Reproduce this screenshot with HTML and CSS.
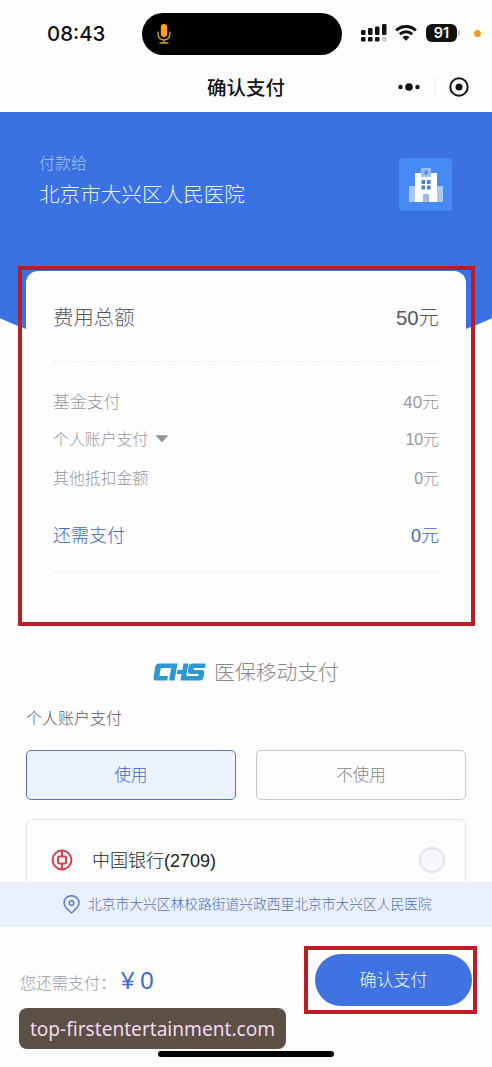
FILE: index.html
```html
<!DOCTYPE html>
<html lang="zh-CN">
<head>
<meta charset="utf-8">
<title>确认支付</title>
<link rel="stylesheet" href="styles.css">
</head>
<body>
<div class="screen">
  <header class="status">
    <span class="time">08:43</span>
    <div class="island">
      <svg width="16" height="22" viewBox="0 0 16 22" fill="none">
        <rect x="4.800" y="1" width="6.400" height="13" rx="3.200" fill="#ff9d1c"/>
        <path d="M2 8.500v2.500a6 6 0 0 0 12 0V8.500M8 17v3M3.500 20h9" stroke="#c9a32b" stroke-width="1.400"/>
      </svg>
    </div>
    <div class="indicators">
      <svg class="signal" width="26" height="18" viewBox="0 0 26 18" fill="#111">
        <rect x="0" y="6" width="4.500" height="5" rx="1.300"/><rect x="7" y="4" width="4.500" height="7" rx="1.300"/><rect x="14" y="2.500" width="4.500" height="8.500" rx="1.300"/><rect x="21" y="0" width="4.500" height="11" rx="1.300"/>
        <rect x="0" y="13" width="4.500" height="4.500" rx="1.300"/><rect x="7" y="13" width="4.500" height="4.500" rx="1.300"/><rect x="14" y="13" width="4.500" height="4.500" rx="1.300"/><rect x="21" y="13" width="4.500" height="4.500" rx="1.300" fill="#ccc"/>
      </svg>
      <svg class="wifi" width="22" height="16" viewBox="0 0 22 16" fill="none" stroke="#111" stroke-width="2.900">
        <path d="M1.200 5.500a14 14 0 0 1 19.600 0M4.800 9.300a9 9 0 0 1 12.400 0"/>
        <path d="M11 15.800 7.500 12.200a5 5 0 0 1 7 0Z" fill="#111" stroke="none"/>
      </svg>
      <span class="battery">91</span><i class="battery-tip"></i><i class="privacy-dot"></i>
    </div>
  </header>
  <nav class="nav">
    <span></span>
    <h1>确认支付</h1>
    <div class="capsule">
      <svg width="22" height="8" viewBox="0 0 22 8" fill="#111"><circle cx="2.500" cy="4" r="2.200"/><circle cx="11" cy="4" r="3.800"/><circle cx="19.500" cy="4" r="2.200"/></svg>
      <i class="split"></i>
      <svg width="20" height="20" viewBox="0 0 20 20"><circle cx="10" cy="10" r="8.700" fill="none" stroke="#111" stroke-width="2"/><circle cx="10" cy="10" r="3.500" fill="#111"/></svg>
    </div>
  </nav>

  <section class="hero">
    <div class="payee"><span class="payee-label">付款给</span><span class="payee-name">北京市大兴区人民医院</span></div>
    <div class="hospital">
      <svg width="36" height="36" viewBox="0 0 36 36">
        <path fill="#a9c9fd" d="M1 19h7v16H1zM28 19h7v16h-7z"/>
        <path fill="#fff" d="M7 6h22v29H7z"/>
        <path fill="#9bc1fb" d="M13 1h10v9H13z"/>
        <path d="M18 3v5M15.500 5.500h5" stroke="#4c86e8" stroke-width="1.500"/>
        <path fill="#4680e6" d="M13.500 13H17v4h-3.500zM19 13h3.500v4H19zM13.500 18.500H17v4h-3.500zM19 18.500h3.500v4H19z"/>
        <path fill="#9db9ee" d="M15 27h6v8h-6z"/>
      </svg>
    </div>
  </section>

  <section class="bill">
    <div class="row total"><span>费用总额</span><span>50元</span></div>
    <div class="details">
      <div class="row fund"><span>基金支付</span><span>40元</span></div>
      <div class="row"><span class="toggle">个人账户支付<i class="caret"></i></span><span>10元</span></div>
      <div class="row"><span>其他抵扣金额</span><span>0元</span></div>
    </div>
    <div class="row due"><span>还需支付</span><span>0元</span></div>
    <div class="bill-frame"></div>
  </section>

  <section class="method">
    <div class="brand">
      <svg width="53" height="18" viewBox="0 0 53 18" fill="#2b98d3">
        <path d="M6 .5H24.500L21.500 17.500H16L18.200 5H8.500Q7.800 5 7.600 6L6.500 12Q6.300 13 7.300 13H15L14.200 17.500H3Q.2 17.500 .6 14.500L2.200 4Q2.800 .5 6 .5Z"/>
        <path d="M30.500 .5H35.500L34.100 8.300 33.300 13H45.300L45.700 11H38Q34.500 11 35 7.500L35.500 4Q36 .5 39.500 .5H52.700L52 5H40.700L40.400 7H48.500Q51.600 7 51.200 10L50.500 14Q49.900 17.500 46.500 17.500H27.500L28.500 11H23.700L24.400 7H29.400Z"/>
      </svg>
      <span>医保移动支付</span>
    </div>
    <h2>个人账户支付</h2>
    <div class="choices"><button class="choice active">使用</button><button class="choice">不使用</button></div>
    <div class="bank">
      <svg width="22" height="22" viewBox="0 0 22 22" fill="none" stroke="#dc3c50" stroke-width="2"><circle cx="11" cy="11" r="9.400"/><rect x="7" y="7.500" width="8" height="7" rx="1"/><path d="M11 2v5.500M11 14.500V20"/></svg>
      <span>中国银行(2709)</span>
      <i class="radio"></i>
    </div>
  </section>

  <div class="address">
    <svg width="17" height="19" viewBox="0 0 17 19" fill="none" stroke="#5878c8" stroke-width="1.400"><path d="M8.500 18C5 15 1 11.800 1 7.900a7.500 7.200 0 0 1 15 0C16 11.800 12 15 8.500 18Z"/><circle cx="8.500" cy="8" r="2.200"/></svg>
    <span>北京市大兴区林校路街道兴政西里北京市大兴区人民医院</span>
  </div>

  <footer class="footer">
    <span class="need">您还需支付：</span><span class="amount">¥<b>0</b></span>
    <div class="pay-frame"><button class="pay">确认支付</button></div>
    <div class="watermark">top-firstentertainment.com</div>
    <i class="home-bar"></i>
  </footer>
</div>
</body>
</html>
```

FILE: styles.css
```css
* { box-sizing: border-box; }
body { margin: 0; }
.screen {
  position: relative;
  display: flex;
  flex-direction: column;
  width: 492px;
  height: 1067px;
  overflow: hidden;
  background: #fdfdfd;
  font-family: "Liberation Sans", "Noto Sans CJK SC", sans-serif;
  font-weight: 300;
  color: #58585c;
}
h1, h2 { margin: 0; }
button { font: inherit; padding: 0; }
span { white-space: nowrap; }
svg, i { flex: none; display: block; }

.status { display: flex; align-items: center; height: 68px; flex: none; }
.time { width: 142px; padding-left: 47px; font: 500 20.400px/26px Inter, sans-serif; color: #111; }
.island { display: flex; align-items: center; width: 200px; height: 42px; padding-left: 14px; border-radius: 21px; background: #000; }
.indicators { display: flex; align-items: center; padding-left: 19px; height: 20px; margin-bottom: 2px; }
.wifi { margin-left: 8px; }
.battery { width: 31px; height: 18px; margin-left: 9px; border-radius: 6px; background: #111; color: #fff; font: 600 14.500px/18px Inter, sans-serif; text-align: center; }
.battery-tip { width: 2px; height: 6px; margin-left: 1px; border-radius: 0 2px 2px 0; background: #bbb; }
.privacy-dot { width: 7px; height: 7px; margin-left: 14px; border-radius: 50%; background: #f29b27; }

.nav { display: grid; grid-template-columns: 1fr auto 1fr; align-items: center; height: 44px; flex: none; padding-bottom: 6px; }
.nav h1 { padding-top: 1px; font-size: 19.500px; line-height: 28px; font-weight: 500; color: #111; }
.capsule { display: flex; align-items: center; justify-content: flex-end; padding-right: 23px; }
.split { width: 1px; height: 22px; margin: 0 14px; background: #ededed; }

.hero { display: flex; justify-content: space-between; flex: none; height: 259px; padding: 39px 40px 0 39px; background: #3b72e3; clip-path: circle(600px at 50% -341px); }
.payee { display: flex; flex-direction: column; }
.payee-label { font-size: 16px; line-height: 26px; color: #a5c3f8; }
.payee-name { font-size: 20.600px; line-height: 36px; color: #eaf5ff; }
.hospital { display: flex; align-items: center; justify-content: center; width: 53px; height: 53px; margin-top: 7px; border-radius: 4px; background: #478af4; }

.bill { position: relative; flex: none; height: 355px; margin: -100px 26px 0; padding: 0 27px; border-radius: 12px 12px 0 0; background: #fdfdfd; }
.row { display: flex; align-items: center; justify-content: space-between; }
.total { height: 91px; border-bottom: 1px dashed #e9e9ec; font-size: 20.400px; }
.details { padding-top: 19px; color: #98989b; font-size: 15.900px; }
.details .row { height: 38.500px; }
.details .fund { font-size: 16.900px; }
.toggle { display: flex; align-items: center; gap: 7px; }
.caret { width: 13px; height: 7px; background: #929295; clip-path: polygon(0 0, 100% 0, 50% 100%); }
.due { height: 75px; border-bottom: 1px dashed #ececf0; color: #3f65c5; font-size: 18px; }
.bill-frame { position: absolute; top: -5px; right: -9px; bottom: 0; left: -8px; border: 4px solid #b91d25; }

.method { flex: none; height: 256px; padding: 28px 26px 0; overflow: hidden; }
.brand { display: flex; align-items: center; justify-content: center; gap: 8px; height: 36px; color: #88888b; font-size: 20.800px; }
.brand span { margin-top: -2px; }
.method h2 { margin-top: 16px; font-size: 16px; line-height: 26px; font-weight: 300; }
.choices { display: grid; grid-template-columns: 1fr 1fr; gap: 20px; margin-top: 18px; }
.choice { height: 50px; padding-bottom: 2px; border: 1px solid #c6c6ce; border-radius: 5px; background: #fdfdfd; color: #858589; font-size: 16.500px; }
.choice.active { border-color: #5873c3; background: #edf3fd; color: #4266c0; }
.bank { display: flex; align-items: center; height: 82px; margin-top: 19px; padding: 0 20px 0 24px; border: 1px solid #e6e6ee; border-radius: 6px; color: #222; font-size: 18px; }
.bank span { flex: 1; margin: -2px 0 0 19px; }
.radio { width: 26px; height: 26px; border: 2px solid #e2e4ea; border-radius: 50%; background: #f5f7fc; }

.address { position: relative; display: flex; align-items: center; flex: none; height: 45px; padding-left: 63px; gap: 8px; background: #e9effb; color: #4e70c0; font-size: 13.750px; }
.address span { margin-top: -3px; }
.footer { position: relative; display: flex; align-items: center; flex: none; height: 140px; padding: 0 15px 34px 20px; }
.need { width: 101px; color: #9b9b9e; font-size: 16px; padding-top: 4px; }
.amount { padding-top: 2px; color: #406bd3; font-size: 24px; }
.amount b { margin-left: 6px; font-weight: 400; }
.pay-frame { margin-left: auto; width: 173px; height: 68px; padding: 4px 1px 4px 7px; border: 4px solid #b91d25; }
.pay { display: block; width: 157px; height: 52px; padding-bottom: 3px; border: 0; border-radius: 26px; background: #3e73e1; color: #edf7ff; font-size: 17px; }
.watermark { position: absolute; left: 19px; top: 81px; width: 267px; height: 41px; border-radius: 8px; background: #5c4f43; color: #f1d8f5; font: 400 19.100px/43px "Noto Sans", sans-serif; text-align: center; }
.home-bar { position: absolute; left: 158px; top: 124px; width: 176px; height: 6px; border-radius: 3px; background: #000; }
```
